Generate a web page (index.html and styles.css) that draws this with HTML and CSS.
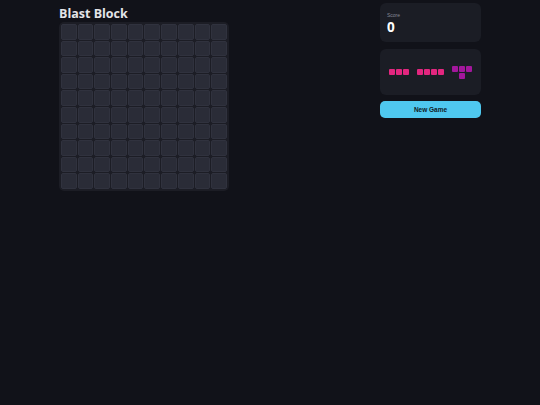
FILE: index.html
```html
<!DOCTYPE html>
<html lang="en">
<head>
    <meta charset="UTF-8">
    <meta name="viewport" content="width=device-width, initial-scale=1.0">
    <title>Blast Block</title>
    <link rel="stylesheet" href="styles.css">
</head>
<body>
    <main class="app">
        <section class="game-column">
            <h1 class="title">Blast Block</h1>
            <div class="board">
                <div class="cell"></div><div class="cell"></div><div class="cell"></div><div class="cell"></div><div class="cell"></div><div class="cell"></div><div class="cell"></div><div class="cell"></div><div class="cell"></div><div class="cell"></div>
                <div class="cell"></div><div class="cell"></div><div class="cell"></div><div class="cell"></div><div class="cell"></div><div class="cell"></div><div class="cell"></div><div class="cell"></div><div class="cell"></div><div class="cell"></div>
                <div class="cell"></div><div class="cell"></div><div class="cell"></div><div class="cell"></div><div class="cell"></div><div class="cell"></div><div class="cell"></div><div class="cell"></div><div class="cell"></div><div class="cell"></div>
                <div class="cell"></div><div class="cell"></div><div class="cell"></div><div class="cell"></div><div class="cell"></div><div class="cell"></div><div class="cell"></div><div class="cell"></div><div class="cell"></div><div class="cell"></div>
                <div class="cell"></div><div class="cell"></div><div class="cell"></div><div class="cell"></div><div class="cell"></div><div class="cell"></div><div class="cell"></div><div class="cell"></div><div class="cell"></div><div class="cell"></div>
                <div class="cell"></div><div class="cell"></div><div class="cell"></div><div class="cell"></div><div class="cell"></div><div class="cell"></div><div class="cell"></div><div class="cell"></div><div class="cell"></div><div class="cell"></div>
                <div class="cell"></div><div class="cell"></div><div class="cell"></div><div class="cell"></div><div class="cell"></div><div class="cell"></div><div class="cell"></div><div class="cell"></div><div class="cell"></div><div class="cell"></div>
                <div class="cell"></div><div class="cell"></div><div class="cell"></div><div class="cell"></div><div class="cell"></div><div class="cell"></div><div class="cell"></div><div class="cell"></div><div class="cell"></div><div class="cell"></div>
                <div class="cell"></div><div class="cell"></div><div class="cell"></div><div class="cell"></div><div class="cell"></div><div class="cell"></div><div class="cell"></div><div class="cell"></div><div class="cell"></div><div class="cell"></div>
                <div class="cell"></div><div class="cell"></div><div class="cell"></div><div class="cell"></div><div class="cell"></div><div class="cell"></div><div class="cell"></div><div class="cell"></div><div class="cell"></div><div class="cell"></div>
            </div>
        </section>

        <aside class="side-column">
            <div class="card score-card">
                <div class="score-label">Score</div>
                <div class="score-value">0</div>
            </div>

            <div class="card pieces-card">
                <div class="piece" style="grid-template-columns: repeat(3, 6px);">
                    <span class="block pink"></span><span class="block pink"></span><span class="block pink"></span>
                </div>
                <div class="piece" style="grid-template-columns: repeat(4, 6px);">
                    <span class="block pink"></span><span class="block pink"></span><span class="block pink"></span><span class="block pink"></span>
                </div>
                <div class="piece" style="grid-template-columns: repeat(3, 6px);">
                    <span class="block purple"></span><span class="block purple"></span><span class="block purple"></span>
                    <span class="block empty"></span><span class="block purple"></span><span class="block empty"></span>
                </div>
            </div>

            <button class="new-game">New Game</button>
        </aside>
    </main>
</body>
</html>
```

FILE: styles.css
```css
:root {
    --background-color: #111219;
    --card-background: #1b1d25;
    --board-background: #1c1d25;
    --cell-color: #2a2c37;
    --cell-border: #30323e;
    --text-color: #e3e4e8;
    --secondary-text: #868995;
    --accent-color: #4fc8ef;
    --pink: #e3267f;
    --purple: #a3179c;
}

* {
    margin: 0;
    padding: 0;
    box-sizing: border-box;
}

body {
    font-family: "Open Sans", "Noto Sans", sans-serif;
    background-color: var(--background-color);
    color: var(--text-color);
    min-height: 100vh;
}

.app {
    width: 422px;
    margin: 0 auto;
    display: flex;
    justify-content: space-between;
    align-items: flex-start;
    padding-top: 3px;
}

.title {
    font-size: 12.5px;
    font-weight: 700;
    line-height: 19px;
    padding-top: 1px;
    margin-bottom: -1px;
    color: var(--text-color);
}

.board {
    width: 170px;
    height: 169px;
    background-color: var(--board-background);
    border-radius: 5px;
    padding: 2px;
    display: grid;
    grid-template-columns: repeat(10, 1fr);
    grid-template-rows: repeat(10, 1fr);
    gap: 1px;
}

.cell {
    background-color: var(--cell-color);
    border: 1px solid var(--cell-border);
    border-radius: 2px;
}

.side-column {
    width: 101px;
    display: flex;
    flex-direction: column;
}

.card {
    background-color: var(--card-background);
    border-radius: 6px;
}

.score-card {
    height: 39px;
    padding: 9px 7px 0;
}

.score-label {
    font-family: "Liberation Sans", sans-serif;
    font-size: 5px;
    line-height: 6px;
    margin-bottom: 1px;
    color: var(--secondary-text);
}

.score-value {
    font-size: 13.5px;
    font-weight: 700;
    line-height: 16px;
    color: #ffffff;
}

.pieces-card {
    margin-top: 7px;
    height: 46px;
    padding: 0 9px;
    display: flex;
    justify-content: space-between;
    align-items: center;
}

.piece {
    display: grid;
    gap: 1px;
}

.block {
    display: block;
    width: 6px;
    height: 6px;
    border-radius: 1px;
}

.block.pink {
    background-color: var(--pink);
}

.block.purple {
    background-color: var(--purple);
}

.block.empty {
    background: transparent;
}

.new-game {
    margin-top: 6px;
    height: 17px;
    border: none;
    border-radius: 5px;
    background-color: var(--accent-color);
    color: #0e1a26;
    font-family: "Liberation Sans", sans-serif;
    font-size: 6.5px;
    font-weight: 700;
    cursor: pointer;
}
```
